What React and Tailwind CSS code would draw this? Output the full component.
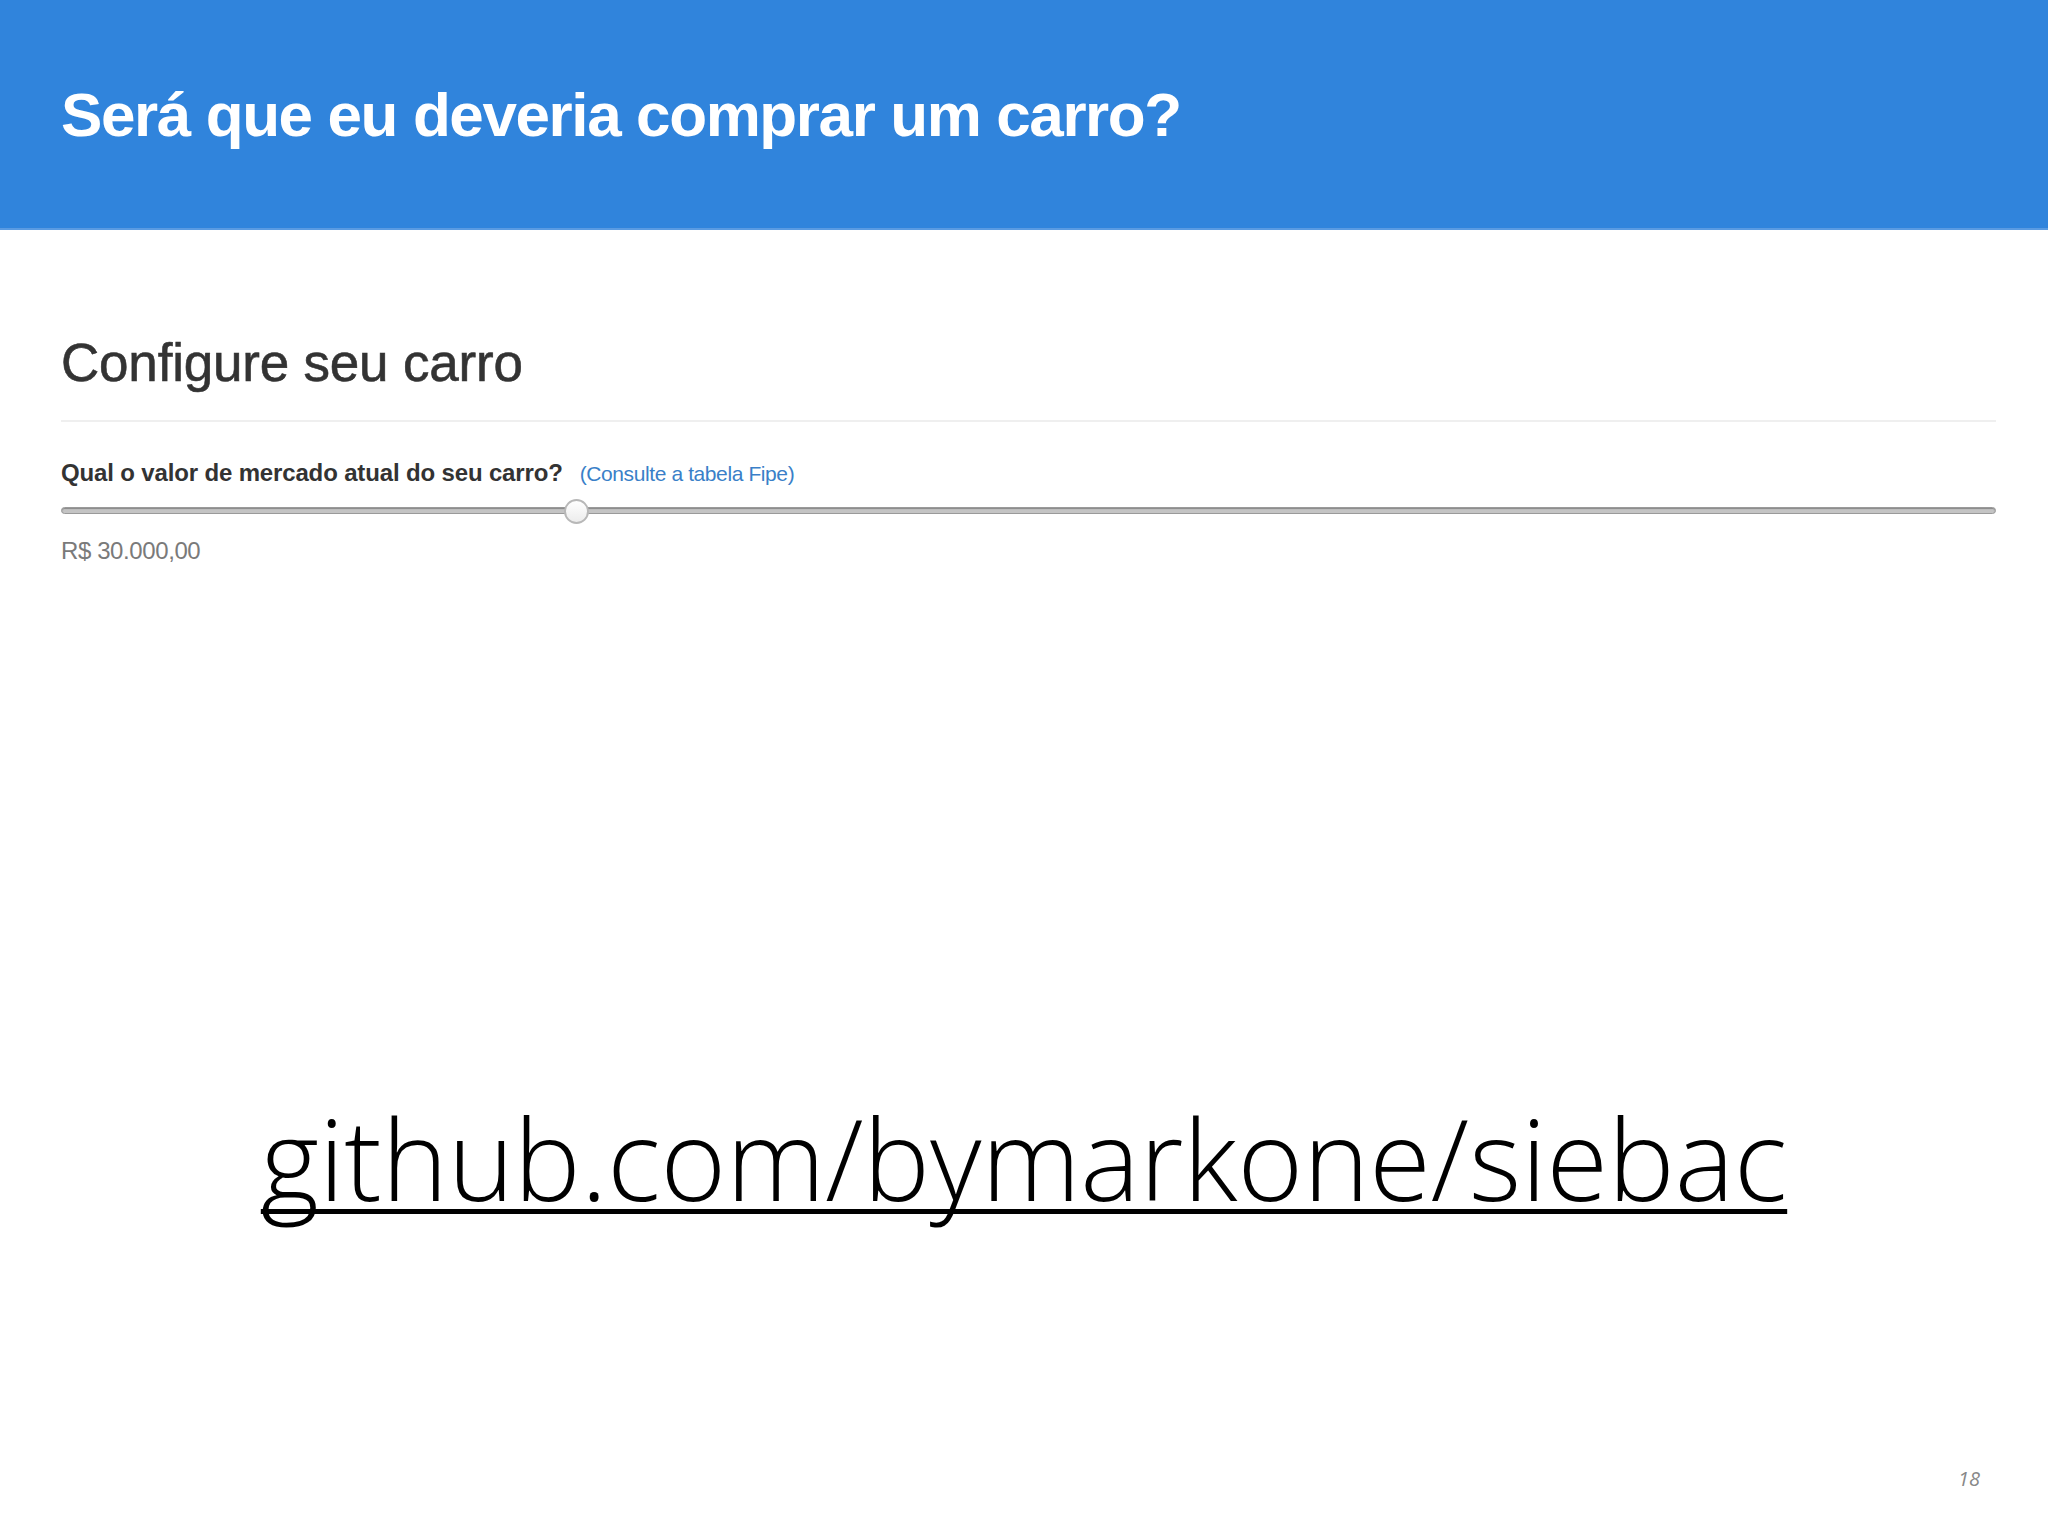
export default function App() {
  const sans = { fontFamily: '"Liberation Sans", Arial, sans-serif' };
  const open = { fontFamily: '"Open Sans", sans-serif' };

  return (
    <div className="flex h-screen w-full flex-col bg-white" style={sans}>
      {/* Header */}
      <header className="flex h-[228px] shrink-0 items-center bg-[#3084dc] pl-[61px] shadow-[0_2px_0_#5a9be2]">
        <h1 className="text-[62px] font-bold tracking-[-1.4px] text-white">
          Será que eu deveria comprar um carro?
        </h1>
      </header>

      {/* Form */}
      <section className="pl-[61px] pr-[52px] pt-[108px]">
        <h2 className="text-[53px] leading-none tracking-[-0.2px] text-[#333] [-webkit-text-stroke:0.6px_#333]">
          Configure seu carro
        </h2>
        <div className="mt-[31px] h-[2px] bg-[#efefef]" />

        <div className="mt-[33px] flex items-baseline gap-[17px]">
          <span className="text-[24px] font-bold tracking-[-0.15px] text-[#333]">
            Qual o valor de mercado atual do seu carro?
          </span>
          <span className="text-[21px] tracking-[-0.4px] text-[#3a7fc8]">(Consulte a tabela Fipe)</span>
        </div>

        {/* Slider */}
        <div className="relative mt-[8px] h-[24px]">
          <div className="absolute left-0 right-0 top-[8px] h-[7px] rounded-full border border-[#9a9a9a] bg-[#c4c4c4] shadow-[inset_0_1px_1px_#888]" />
          <div className="absolute left-[503px] top-0 h-[25px] w-[25px] rounded-full border-2 border-[#b8b8b8] bg-gradient-to-b from-white to-[#ececec]" />
        </div>

        <div className="mt-[10px] text-[24px] tracking-[-0.4px] text-[#7a7a7a]">R$ 30.000,00</div>
      </section>

      {/* Link */}
      <div className="flex flex-1 flex-col justify-end">
        <div className="flex justify-center pb-[250px]">
          <span
            className="text-[112px] font-light leading-none text-black underline decoration-[5px] underline-offset-[8px] [text-decoration-skip-ink:none]"
            style={open}
          >
            github.com/bymarkone/siebac
          </span>
        </div>
        <div className="flex justify-end pb-[42px] pr-[68px]">
          <span className="text-[20px] italic text-[#888]" style={open}>
            18
          </span>
        </div>
      </div>
    </div>
  );
}
